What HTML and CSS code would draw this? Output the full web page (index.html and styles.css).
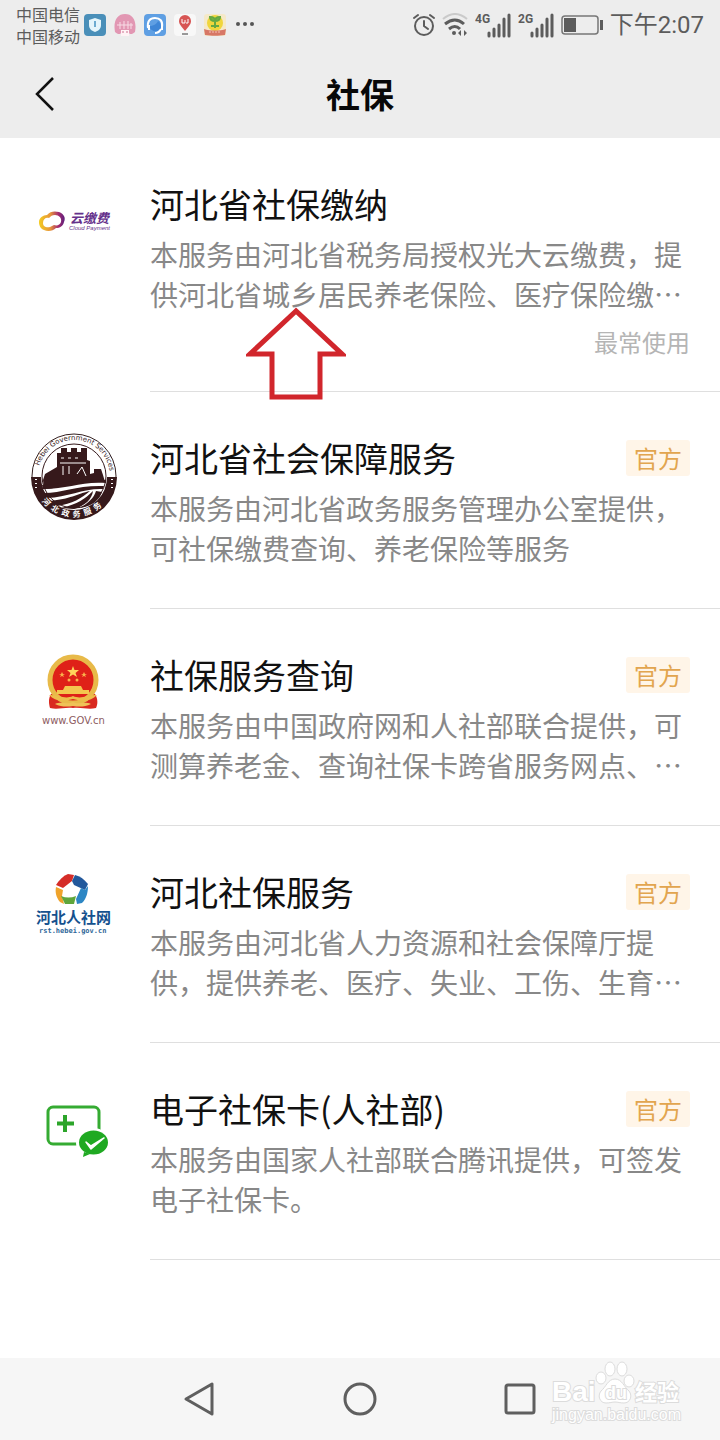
FILE: index.html
```html
<!DOCTYPE html>
<html lang="zh-CN">
<head>
<meta charset="utf-8">
<meta name="viewport" content="width=device-width, initial-scale=1">
<title>社保</title>
<link rel="stylesheet" href="styles.css">
</head>
<body>
<header class="top">
  <div class="status">
    <div class="carriers"><span>中国电信</span><span>中国移动</span></div>
    <div class="apps">
      <svg width="22" height="22" viewBox="0 0 22 22"><rect width="22" height="22" rx="4" fill="#4a8fb9"/><path d="M11 4l6 2v5c0 4-3 6-6 7-3-1-6-3-6-7V6z" fill="#e4f5fb"/><path d="M11 7v6" stroke="#6cabd0" stroke-width="2"/></svg>
      <svg width="22" height="22" viewBox="0 0 22 22"><path d="M1 18C-1 7 3 0 11 0s12 7 10 18c-2 2-5 3-6 1H7c-1 2-4 1-6-1z" fill="#e297b3"/><path d="M3 11h16M6 8v7m4-8v8m4-8v8m3-6v6" stroke="#f8dce6" stroke-width="1"/><path d="M7 16h8v6H7z" fill="#fff3f5"/><path d="M9 17v2m4-2v2" stroke="#cc7592" stroke-width="1"/></svg>
      <svg width="22" height="22" viewBox="0 0 22 22"><rect width="22" height="22" rx="4" fill="#5f9fe3"/><path d="M4 14C3 7 6 4 11 4s8 3 7 9" fill="none" stroke="#fff" stroke-width="2"/><path d="M5 12c4 0 8-2 9-5 3 2 3 4 3 6-1 6-10 6-12-1z" fill="#3f86d6"/><path d="M4 11h2v5H4zm13 0h2v5h-2z" fill="#fff"/><path d="M17 15c-1 2-3 4-6 4" fill="none" stroke="#fff" stroke-width="2"/></svg>
      <svg width="22" height="22" viewBox="0 0 22 22"><rect width="22" height="22" rx="4" fill="#f8f8f8"/><path d="M11 17C7 12 5 10 5 7a6 6 0 0 1 12 0c0 3-2 5-6 10z" fill="#d75554"/><path d="M8 5v4h3V6m3-1v4h-2" fill="none" stroke="#fff"/><path d="M8 20h6" stroke="#999" stroke-width="2"/></svg>
      <svg width="22" height="22" viewBox="0 0 22 22"><rect width="22" height="22" rx="3" fill="#f5e9c8"/><circle cx="11" cy="9" r="8" fill="#f0d63c"/><path d="M11 14V7M11 7C7 7 6 5 6 3c4 0 5 1 5 4 0-3 2-4 5-4 0 3-2 4-5 4M7 12h8" stroke="#64a843" stroke-width="2" fill="#79b944"/><path d="M0 15c6 2 16 2 22 0l-1 6c-6 1-14 1-20 0z" fill="#d77766"/><path d="M5 18h12" stroke="#f3c1b2" stroke-dasharray="2 1"/></svg>
      <svg width="22" height="22" viewBox="0 0 22 22" fill="#555"><circle cx="4" cy="10" r="2"/><circle cx="11" cy="10" r="2"/><circle cx="18" cy="10" r="2"/></svg>
    </div>
    <div class="signals">
      <svg width="22" height="24" viewBox="0 0 22 24" fill="none" stroke="#5c5c5c" stroke-width="2" stroke-linecap="round"><circle cx="11" cy="13" r="9"/><path d="M11 8v5l4 3M1 5l4-3M21 5l-4-3"/></svg>
      <svg width="26" height="24" viewBox="0 0 26 24" fill="none"><path d="M1 6q12-10 24 0" stroke="#cacaca" stroke-width="2"/><path d="M3 11q10-8 19 0M7 16q6-5 11 0" stroke="#5c5c5c" stroke-width="3"/><circle cx="12" cy="20" r="2" fill="#5c5c5c"/><path d="M19 17v6l-3-3zm3 0v6l3-3z" fill="#5c5c5c"/></svg>
      <svg width="36" height="26" viewBox="0 0 36 26"><text x="0" y="11" class="net">4G</text><path d="M14 21v3M19 17v7M24 13v11M29 7v17M34 3v21" stroke="#5c5c5c" stroke-width="3" stroke-linecap="round"/></svg>
      <svg width="36" height="26" viewBox="0 0 36 26"><text x="0" y="11" class="net">2G</text><path d="M14 21v3M19 17v7M24 13v11M29 7v17M34 3v21" stroke="#5c5c5c" stroke-width="3" stroke-linecap="round"/></svg>
      <svg width="42" height="22" viewBox="0 0 42 22"><rect x="1" y="2" width="36" height="18" rx="3" fill="none" stroke="#777" stroke-width="1.5"/><path d="M3 4h12v14H3zM39 6h3v10h-3z" fill="#5c5c5c"/></svg>
      <time class="clock">下午2:07</time>
    </div>
  </div>
  <div class="titlebar">
    <button class="back" aria-label="返回"><svg width="20" height="36" viewBox="0 0 20 36"><path d="M18 2 2 18l16 16" fill="none" stroke="#111" stroke-width="2.5"/></svg></button>
    <h1 class="heading">社保</h1>
  </div>
</header>

<main class="list">
  <article class="item">
    <svg class="logo" viewBox="0 0 150 140">
      <defs><linearGradient id="cloud"><stop offset="0" stop-color="#f4cc20"/><stop offset=".45" stop-color="#e6933b"/><stop offset=".75" stop-color="#a62b70"/><stop offset="1" stop-color="#5b1f7c"/></linearGradient></defs>
      <path fill-rule="evenodd" d="M39 84c0-4 4-7 8-7 3-4 8-4 12-3 5 2 7 6 5 10-1 4-4 6-8 6-3 3-8 4-12 2-3-1-5-4-5-8zM43 85c0 4 4 5 7 4l4-2c3 1 6 0 7-3 1-4-2-7-6-7-3 0-4 1-6 3-3-1-6 1-6 5z" fill="url(#cloud)"/>
      <text x="70" y="85" class="pay-cn">云缴费</text><text x="69" y="92" class="pay-en">Cloud Payment</text>
    </svg>
    <div class="info info-noted">
      <h2 class="name">河北省社保缴纳</h2>
      <p class="desc">本服务由河北省税务局授权光大云缴费，提供河北省城乡居民养老保险、医疗保险缴…</p>
      <p class="note">最常使用</p>
    </div>
  </article>

  <article class="item">
    <svg class="logo" viewBox="0 0 150 140">
      <defs><path id="arcTop" d="M38 84a36 36 0 0 1 72 0"/><path id="arcLow" d="M33 84a41 41 0 0 0 82 0"/></defs>
      <circle cx="74" cy="84" r="42" fill="#fff" stroke="#342020" stroke-width="1"/>
      <path d="M31 85h10a33 33 0 0 0 66 0h10a43 43 0 0 1-86 0z" fill="#36191b"/>
      <circle cx="74" cy="84" r="32" fill="#fff" stroke="#36191b"/>
      <path d="M43 88l2-6 12-7V61h4v-5h6v4h4v-4h6v4h4v-4h6v12l3 1v13l4-1v-4h7l2 6 2 7c-18-3-32-1-44 4-6 2-12 3-17 3z" fill="#36191b"/>
      <path d="M61 66h3m4 0h3m4 0h3M60 71h26M77 82l5-7 4 9M63 74v9m6-9v8" stroke="#fff" fill="none" stroke-width="1"/>
      <path d="M42 93c22 0 36-8 64-5v3c-24-2-38 6-63 6z" fill="#36191b"/>
      <path d="M44 101c19 0 33-8 60-7l-1 3c-18-1-35 8-56 9z" fill="#36191b"/>
      <path d="M50 109c20-2 27-7 40-10-8 7-18 13-33 15zM61 116c17-4 24-9 32-17-1 8-8 15-19 18zM80 116c8-5 14-10 16-17l6 1c-2 7-9 14-22 16z" fill="#36191b"/>
      <text class="seal-en"><textPath href="#arcTop" startOffset="10">Hebei Government Services</textPath></text>
      <text class="seal-cn"><textPath href="#arcLow" startOffset="27">河&#8194;北&#8194;政&#8194;务&#8194;服&#8194;务</textPath></text>
      <path d="M36 87v9M112 87v9" stroke="#fff" stroke-width="2" stroke-dasharray="1 3"/>
    </svg>
    <div class="info">
      <div class="row"><h2 class="name">河北省社会保障服务</h2><span class="badge">官方</span></div>
      <p class="desc">本服务由河北省政务服务管理办公室提供，可社保缴费查询、养老保险等服务</p>
    </div>
  </article>

  <article class="item">
    <svg class="logo" viewBox="0 0 150 140">
      <path d="M51 85c-3 5-2 10-1 14 8 2 14-1 23 0 9-1 15 2 23 0 2-4 2-9-1-14z" fill="#d92920"/>
      <circle cx="73" cy="71" r="23" fill="#df2118" stroke="#e8ba49" stroke-width="5"/>
      <path d="M73 57l1.500 4h4.500l-3.500 3 1.500 4-4-2.500-4 2.500 1.500-4-3.500-3h4.500z" fill="#ffd35b"/>
      <g fill="#f9b34b"><path d="M62 63l1 2h2l-2 1 1 2-2-1-2 1 1-2-2-1h2zM84 63l1 2h2l-2 1 1 2-2-1-2 1 1-2-2-1h2z"/><circle cx="69" cy="71" r="1.500"/><circle cx="77" cy="71" r="1.500"/></g>
      <path d="M65 77h16l2 4h6v4H57v-4h6z" fill="#f4c74e"/>
      <path d="M49 86c9-1 15 5 24 1 9 4 15-2 24-1-6 6-12 7-24 4-12 3-18 2-24-4z" fill="#edbd4b"/>
      <path d="M55 95c7-3 12 1 18-2 6 3 11-1 18 2-6 3-12 3-18 2-6 1-12 1-18-2z" fill="#efc257"/>
      <text x="42" y="115" class="gov">www.GOV.cn</text>
    </svg>
    <div class="info">
      <div class="row"><h2 class="name">社保服务查询</h2><span class="badge">官方</span></div>
      <p class="desc">本服务由中国政府网和人社部联合提供，可测算养老金、查询社保卡跨省服务网点、…</p>
    </div>
  </article>

  <article class="item">
    <svg class="logo" viewBox="0 0 150 140">
      <path d="M56 59c3-5 7-9 12-11l6 1-2 6-9 7z" fill="#d52d28"/>
      <path d="M75 49c5 1 9 4 13 9l-3 6-11-5-2-4z" fill="#22589b"/>
      <path d="M88 60c0 7-2 13-6 17l-5 1-1-5 5-11 4 2z" fill="#2c86c4"/>
      <path d="M56 61l7 3-1 6 2 8-4-2c-4-5-5-10-4-15z" fill="#efa32b"/>
      <path d="M61 70c5 2 10 2 15 0l-2 8H65z" fill="#5fa63b"/>
      <text x="36" y="97" class="rst-cn">河北人社网</text><text x="39" y="107" class="rst-en">rst.hebei.gov.cn</text>
    </svg>
    <div class="info">
      <div class="row"><h2 class="name">河北社保服务</h2><span class="badge">官方</span></div>
      <p class="desc">本服务由河北省人力资源和社会保障厅提供，提供养老、医疗、失业、工伤、生育…</p>
    </div>
  </article>

  <article class="item">
    <svg class="logo" viewBox="0 0 150 140">
      <rect x="48" y="64" width="51" height="37" rx="5" fill="none" stroke="#35ab32" stroke-width="3"/>
      <path d="M65 72v17M57 80.500h17" stroke="#2ca52a" stroke-width="4"/>
      <ellipse cx="93" cy="100" rx="17" ry="15" fill="#fff"/>
      <path d="M84 109l-1 5 7-3z" fill="#1fa922"/><ellipse cx="93.500" cy="99.500" rx="14.500" ry="12" fill="#1fa922"/>
      <path d="M86 99l5 4 13-8-13 11z" fill="#fff" stroke="#fff" stroke-width="1.500" stroke-linejoin="round"/>
    </svg>
    <div class="info">
      <div class="row"><h2 class="name">电子社保卡(人社部)</h2><span class="badge">官方</span></div>
      <p class="desc">本服务由国家人社部联合腾讯提供，可签发电子社保卡。</p>
    </div>
  </article>

  <svg class="arrow" width="100" height="94" viewBox="0 0 100 94"><path d="M50 4 4 47h22v43h48V47h22z" fill="none" stroke="#d1262c" stroke-width="5"/></svg>
</main>

<nav class="nav">
  <button class="key" aria-label="后退"><svg width="36" height="36" viewBox="0 0 36 36"><path d="M4 18 30 3v30z"/></svg></button>
  <button class="key" aria-label="主页"><svg width="36" height="36" viewBox="0 0 36 36"><circle cx="18" cy="18" r="15"/></svg></button>
  <button class="key" aria-label="最近任务"><svg width="36" height="36" viewBox="0 0 36 36"><rect x="4" y="4" width="28" height="28" rx="2"/></svg></button>
  <svg class="mark" width="136" height="66" viewBox="0 0 136 66">
    <g fill="#fff" stroke="#dcdcdc">
      <text x="2" y="41" class="mark-name">Bai</text>
      <ellipse cx="51" cy="18" rx="5" ry="6"/><ellipse cx="60" cy="9" rx="5" ry="7"/><ellipse cx="72" cy="9" rx="5" ry="7"/><ellipse cx="79" cy="21" rx="5" ry="6"/>
      <path d="M65 19c7 0 9 8 14 12 4 5 1 12-5 12-4 0-6-1-9-1s-5 1-9 1c-6 0-9-7-5-12 5-4 7-12 14-12z"/>
      <text x="55" y="39" class="mark-du">du</text>
      <text x="85" y="40" class="mark-cn">经验</text>
      <text x="2" y="60" class="mark-url">jingyan.baidu.com</text>
    </g>
  </svg>
</nav>
</body>
</html>
```
FILE: styles.css
```css
* { box-sizing: border-box; }

body {
  margin: 0;
  min-height: 100vh;
  display: flex;
  flex-direction: column;
  background: #fff;
  color: #111;
  font-family: "Noto Sans CJK SC", "Noto Sans", sans-serif;
}

h1, h2, p { margin: 0; font-weight: 400; }
button { padding: 0; border: 0; background: none; }
svg { display: block; flex: none; }

.top { background: #ededed; }

.status {
  display: flex;
  align-items: center;
  height: 50px;
  padding: 0 16px;
  color: #5c5c5c;
}
.carriers {
  display: flex;
  flex-direction: column;
  font-size: 16px;
  line-height: 22px;
}
.apps { display: flex; gap: 8px; margin-left: 4px; }
.signals { display: flex; align-items: center; gap: 7px; margin-left: auto; }
.net { font: 700 12px "Roboto", sans-serif; fill: #5c5c5c; }
.clock { font-family: "Roboto", "Noto Sans CJK SC", sans-serif; font-size: 24px; line-height: 32px; }

.titlebar {
  display: grid;
  grid-template-columns: 1fr auto 1fr;
  align-items: center;
  height: 88px;
}
.back { justify-self: start; margin-left: 35px; }
.heading { font-size: 34px; font-weight: 700; line-height: 48px; color: #080808; }

.list { position: relative; }
.item { display: flex; align-items: flex-start; }
.logo { width: 150px; height: 140px; }
.info {
  flex: 1;
  min-width: 0;
  padding: 43px 30px 40px 0;
  border-bottom: 1px solid #dfdfdf;
}
.info-noted { padding-bottom: 37px; }
.row { display: flex; justify-content: space-between; align-items: center; }
.name { font-size: 34px; line-height: 46px; }
.desc { margin-top: 7px; font-size: 28px; line-height: 40px; color: #888; }
.note { margin-top: 16px; font-size: 24px; line-height: 24px; color: #b5b5b5; text-align: right; }
.badge {
  padding: 0 8px;
  border-radius: 3px;
  background: #fff5e8;
  color: #e2a54f;
  font-size: 24px;
  line-height: 36px;
}

.pay-cn { font-size: 13px; font-weight: 700; font-style: italic; fill: #65318b; }
.pay-en { font: italic 6px "Liberation Sans", sans-serif; fill: #65318b; }
.seal-en { font: 7px "DejaVu Sans", sans-serif; fill: #36191b; }
.seal-cn { font-size: 8px; font-weight: 700; fill: #fff; }
.gov { font: 10px "DejaVu Sans", sans-serif; fill: #8d5b61; }
.rst-cn { font-size: 15px; font-weight: 700; fill: #15518e; }
.rst-en { font: 700 7px "DejaVu Sans Mono", monospace; fill: #2f6799; }

.arrow { position: absolute; left: 246px; top: 169px; }

.nav {
  position: relative;
  display: flex;
  justify-content: center;
  align-items: center;
  gap: 124px;
  height: 82px;
  margin-top: auto;
  background: #f6f6f6;
}
.key svg { fill: none; stroke: #5f5f5f; stroke-width: 3; stroke-linejoin: round; }
.mark { position: absolute; right: 34px; top: 2px; }
.mark text { paint-order: stroke; stroke-width: 2px; }
.mark-name { font: 700 28px "Liberation Sans", sans-serif; }
.mark-du { font: 700 18px "Liberation Sans", sans-serif; }
.mark-cn { font-size: 22px; font-weight: 700; }
.mark-url { font: 16px "Liberation Sans", sans-serif; }
```
